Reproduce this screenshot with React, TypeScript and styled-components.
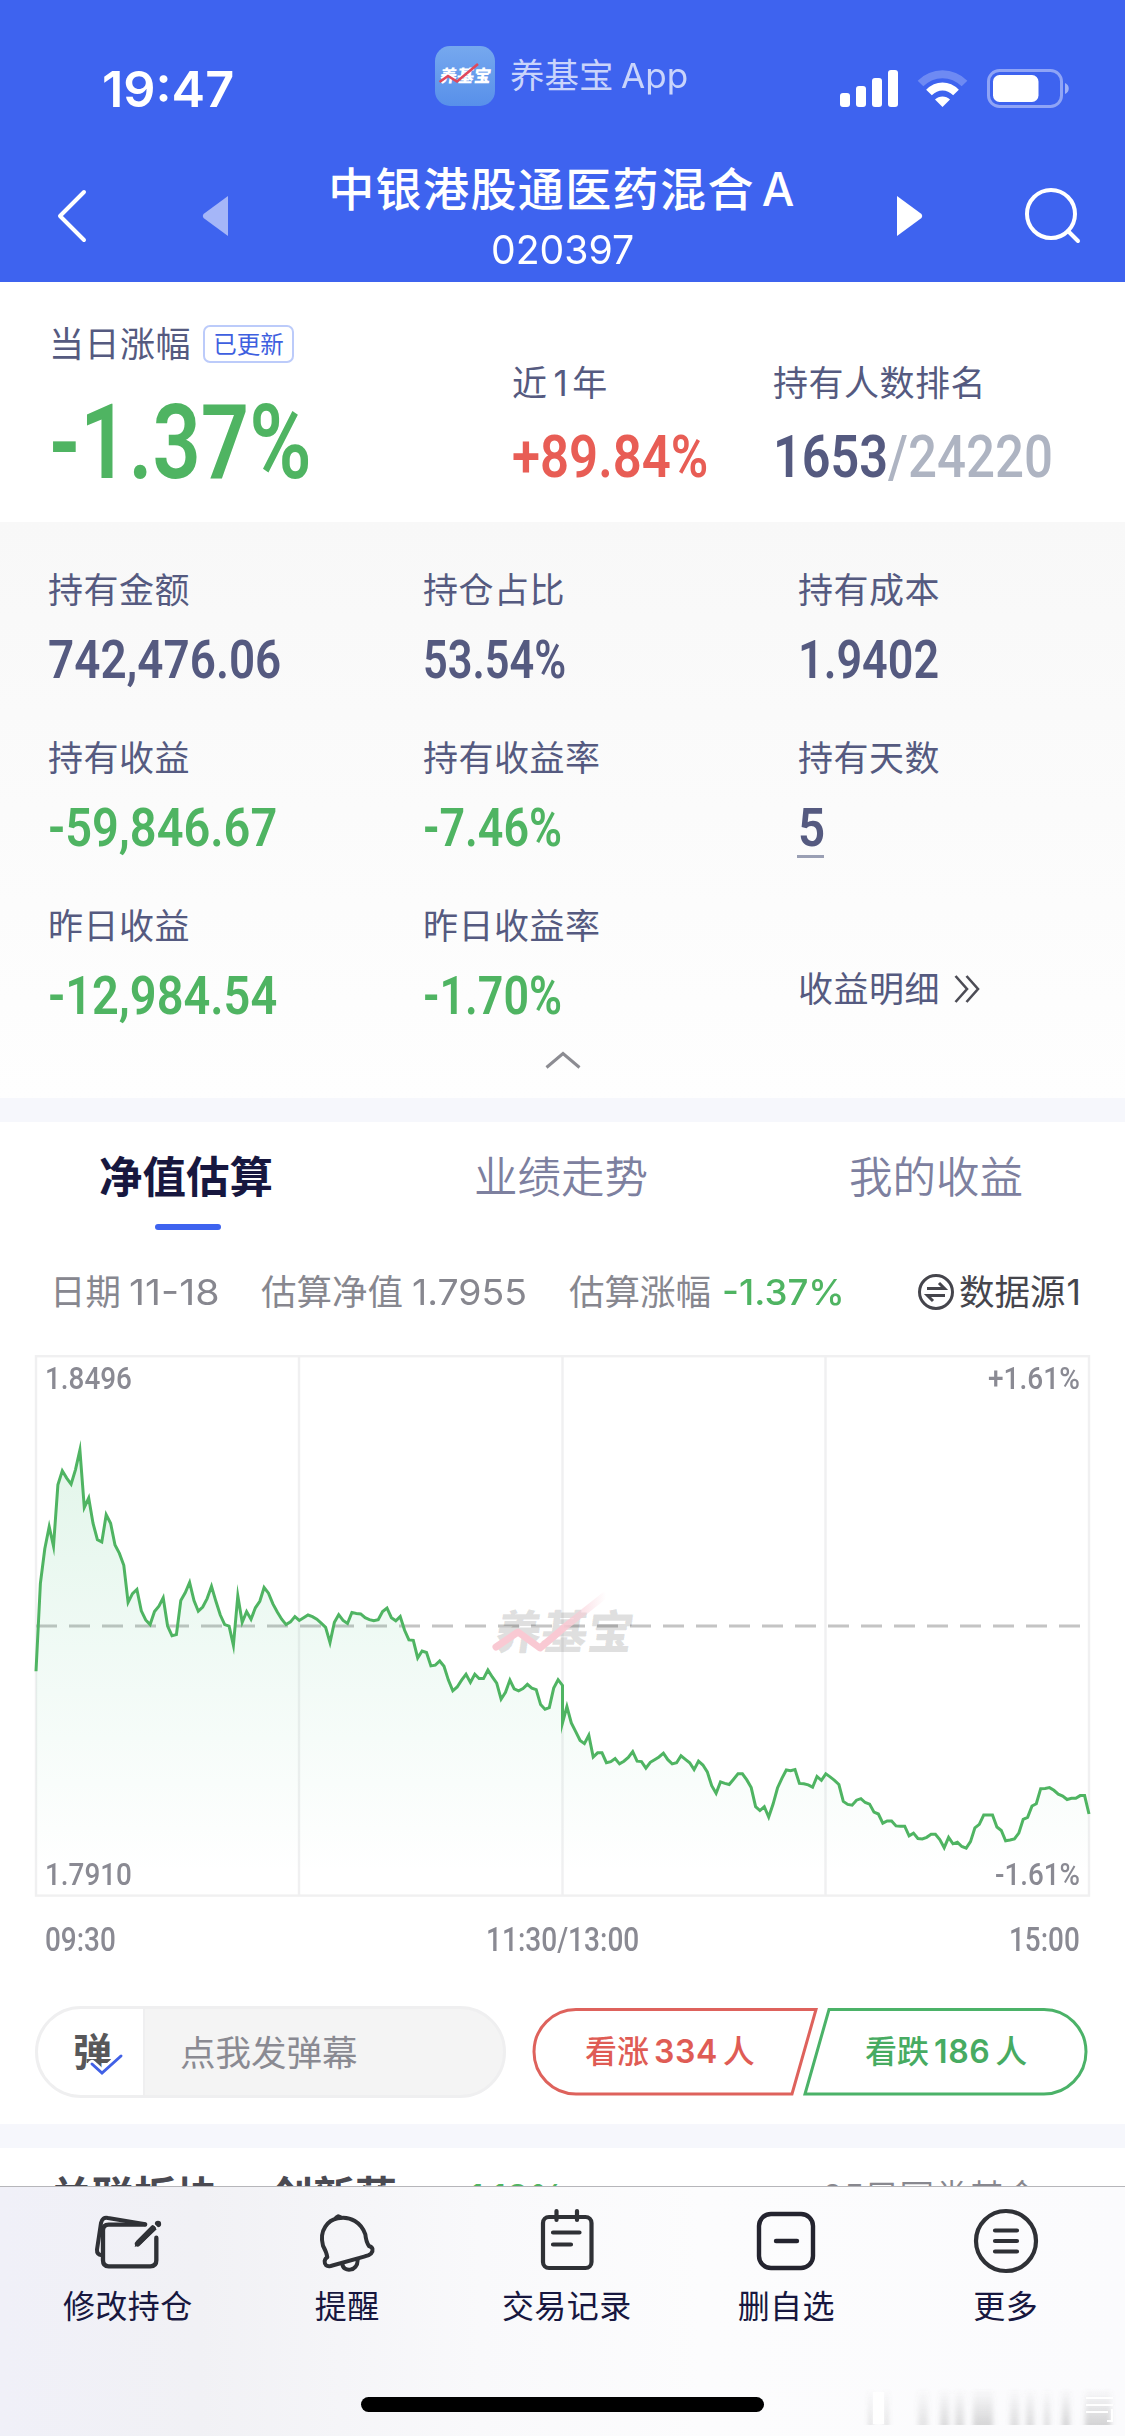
import React, { useLayoutEffect, useRef, useState } from "react";
import styled, { createGlobalStyle } from "styled-components";

const C = {
  blue: "#3e63ef",
  ink: "#555a80",
  green: "#4fb462",
  red: "#e85d55",
  gray: "#8a8a93",
  band: "#f6f7fc",
  navy: "#17173f",
  icon: "#2f3136",
};

const sans = `Inter, "Noto Sans CJK SC", sans-serif`;
const din = `Roboto, "Noto Sans CJK SC", sans-serif`;

const GlobalStyle = createGlobalStyle`
  * { box-sizing: border-box; }
  body { margin: 0; background: #fff; font-family: ${sans}; }
  svg { display: block; flex: none; }
`;

/* ---------- text squeezed to a fixed advance ---------- */

const FitBox = styled.span<{ $w: number; $size: number; $weight: number; $color: string; $din: boolean }>`
  display: block;
  flex: none;
  width: ${(p) => p.$w}px;
  font-family: ${(p) => (p.$din ? din : sans)};
  font-size: ${(p) => p.$size}px;
  font-weight: ${(p) => p.$weight};
  color: ${(p) => p.$color};
  white-space: nowrap;
`;
const FitInner = styled.span`
  display: inline-block;
  transform-origin: 0 50%;
`;

type FitProps = { w: number; size: number; weight?: number; color?: string; plain?: boolean; children: React.ReactNode };

function Fit({ w, size, weight = 600, color = C.ink, plain = false, children }: FitProps) {
  const ref = useRef<HTMLSpanElement>(null);
  const [k, setK] = useState(1);
  useLayoutEffect(() => {
    if (ref.current && ref.current.offsetWidth) setK(w / ref.current.offsetWidth);
  }, [w, size]);
  return (
    <FitBox $w={w} $size={size} $weight={weight} $color={color} $din={!plain}>
      <FitInner ref={ref} style={{ transform: `scaleX(${k})` }}>{children}</FitInner>
    </FitBox>
  );
}

/* ---------- page ---------- */

const Page = styled.div`
  width: 1125px;
  height: 2436px;
  overflow: hidden;
  display: flex;
  flex-direction: column;
  background: #fff;
`;

const Header = styled.header`
  height: 282px;
  flex: none;
  background: ${C.blue};
  color: #fff;
`;

const StatusBar = styled.div`
  height: 150px;
  display: flex;
  align-items: flex-start;
`;
const Clock = styled.div`
  width: 435px;
  padding: 64px 0 0 102px;
  line-height: 50px;
`;
const AppTag = styled.div`
  display: flex;
  align-items: center;
  width: 405px;
  padding-top: 45px;
  color: #c9d4fb;
  font-size: 34.5px;
  line-height: 62px;
`;
const AppIcon = styled.div`
  position: relative;
  width: 60px;
  height: 60px;
  margin-right: 15px;
  border-radius: 15px;
  background: linear-gradient(180deg, #76a8ee, #5890ea);
  display: flex;
  align-items: center;
  justify-content: center;
  svg { position: absolute; left: 0; top: 0; }
`;
const AppIconText = styled.span`
  font-size: 17px;
  font-weight: 900;
  color: #fff;
  transform: skewX(-8deg);
  line-height: 60px;
  white-space: nowrap;
`;
const AppName = styled.span`
  margin-right: 7px;
  white-space: nowrap;
`;
const Signals = styled.div`
  display: flex;
  padding-top: 69px;
`;

const NavRow = styled.div`
  height: 132px;
  display: flex;
  align-items: flex-start;
`;
const NavSide = styled.div<{ $w: number; $pad: number; $top: number }>`
  width: ${(p) => p.$w}px;
  padding: ${(p) => p.$top}px 0 0 ${(p) => p.$pad}px;
`;
const TitleBlock = styled.div`
  width: 600px;
  padding-top: 11px;
  display: flex;
  flex-direction: column;
  align-items: center;
  gap: 8px;
`;
const Title = styled.div`
  display: flex;
  gap: 7px;
  height: 56px;
  line-height: 57px;
  font-size: 46px;
  font-weight: 500;
  letter-spacing: 1.4px;
  white-space: nowrap;
`;
const Code = styled.div`
  height: 48px;
  line-height: 49px;
`;

/* ---------- summary ---------- */

const Summary = styled.section`
  height: 240px;
  flex: none;
  display: flex;
  padding-left: 50px;
`;
const SumCol = styled.div<{ $w: number; $top: number }>`
  width: ${(p) => p.$w}px;
  padding-top: ${(p) => p.$top}px;
`;
const Label = styled.div`
  display: flex;
  align-items: center;
  height: 40px;
  line-height: 41px;
  margin-left: -1px;
  font-size: 35px;
  letter-spacing: 0.5px;
  color: ${C.ink};
  white-space: nowrap;
`;
const YearDigit = styled.span`
  margin: 0 4px 0 6px;
`;
const Badge = styled.span`
  margin-left: 12px;
  width: 91px;
  height: 38px;
  line-height: 35px;
  border: 2px solid #bccbfa;
  border-radius: 7px;
  text-align: center;
  font-size: 23.5px;
  letter-spacing: 0;
  color: #3e5fe0;
`;
const Num = styled.div<{ $h: number; $mt: number }>`
  display: flex;
  height: ${(p) => p.$h}px;
  line-height: ${(p) => p.$h + 1}px;
  margin-top: ${(p) => p.$mt}px;
  margin-left: -1px;
`;

/* ---------- holdings ---------- */

const Holdings = styled.section`
  height: 576px;
  flex: none;
  padding-top: 48px;
  background: linear-gradient(180deg, #f8f8f8, #fefefe);
`;
const HoldGrid = styled.div`
  display: grid;
  grid-template-columns: 375px 375px 1fr;
  grid-auto-rows: 114px;
  row-gap: 54px;
  padding-left: 49px;
`;
const DayRule = styled.div`
  width: 27px;
  height: 3px;
  margin: 3px 0 0 -2px;
  background: #9a9fb4;
`;
const DetailLink = styled(Label)`
  margin-top: 63px;
  gap: 14px;
`;
const Collapse = styled.div`
  display: flex;
  justify-content: center;
  padding-top: 31px;
`;

const Band = styled.div<{ $h: number }>`
  height: ${(p) => p.$h}px;
  flex: none;
  background: ${C.band};
`;

/* ---------- tabs ---------- */

const Tabs = styled.nav`
  display: flex;
  height: 108px;
  flex: none;
`;
const Tab = styled.div<{ $on?: boolean }>`
  width: 375px;
  padding: 27px 3px 0 0;
  display: flex;
  flex-direction: column;
  align-items: center;
  font-size: 43.5px;
  line-height: 56px;
  font-weight: ${(p) => (p.$on ? 600 : 350)};
  color: ${(p) => (p.$on ? C.navy : "#7d809f")};
  &::after {
    content: "";
    width: 66px;
    height: 6px;
    margin: 19px 0 0 3px;
    border-radius: 3px;
    background: ${(p) => (p.$on ? C.blue : "transparent")};
  }
`;

const InfoRow = styled.div`
  display: flex;
  align-items: center;
  height: 125px;
  flex: none;
  padding-left: 50px;
  font-size: 35.5px;
  line-height: 50px;
  color: #87878f;
  white-space: nowrap;
`;
const InfoItem = styled.div<{ $w: number; $gap: number }>`
  display: flex;
  gap: ${(p) => p.$gap}px;
  width: ${(p) => p.$w}px;
`;
const Source = styled.div`
  display: flex;
  align-items: center;
  gap: 4px;
  color: #45454c;
`;
const SourceNo = styled.span`
  margin-left: 1px;
`;

/* ---------- chart ---------- */

const ChartBox = styled.section`
  position: relative;
  width: 1125px;
  height: 541px;
  flex: none;
`;
const Corner = styled.div<{ $right?: boolean; $bottom?: boolean }>`
  position: absolute;
  ${(p) => (p.$right ? "right: 45px;" : "left: 45px;")}
  ${(p) => (p.$bottom ? "bottom: 2px;" : "top: 3px;")}
  height: 40px;
  line-height: 40px;
`;
const Mark = styled.div`
  position: absolute;
  left: 496px;
  top: 248px;
  font-size: 46px;
  line-height: 58px;
  font-weight: 900;
  color: rgba(0, 0, 0, 0.12);
  transform: skewX(-8deg);
  white-space: nowrap;
`;
const MarkLine = styled.svg`
  position: absolute;
  left: 488px;
  top: 234px;
`;
const Times = styled.div`
  display: flex;
  justify-content: space-between;
  height: 109px;
  flex: none;
  padding: 24px 45px 0;
  line-height: 40px;
`;

/* ---------- actions ---------- */

const Actions = styled.section`
  height: 119px;
  flex: none;
  display: flex;
  align-items: flex-start;
  padding: 1px 0 0 35px;
`;
const Danmu = styled.div`
  width: 471px;
  height: 92px;
  margin-right: 26px;
  display: flex;
  border: 3px solid #efeff0;
  border-radius: 46px;
  background: #f4f4f4;
  overflow: hidden;
`;
const DanmuToggle = styled.div`
  position: relative;
  width: 107px;
  border-right: 2px solid #efeff0;
  background: #fff;
  padding-left: 35px;
  font-size: 39px;
  font-weight: 600;
  line-height: 86px;
  color: #58585a;
  svg { position: absolute; left: 50px; top: 41px; }
`;
const DanmuText = styled.div`
  padding-left: 35px;
  font-size: 35.5px;
  line-height: 89px;
  color: #8a8a92;
`;
const Vote = styled.div<{ $color: string; $shift: number; $ml: number }>`
  position: relative;
  width: 286px;
  height: 92px;
  margin-left: ${(p) => p.$ml}px;
  padding-left: ${(p) => p.$shift}px;
  display: flex;
  gap: 5px;
  color: ${(p) => p.$color};
  font-size: 32px;
  font-weight: 500;
  line-height: 92px;
  white-space: nowrap;
  svg { position: absolute; left: 0; top: -1px; }
`;
const Count = styled.span`
  letter-spacing: 0.6px;
  font-weight: 600;
`;

/* ---------- clipped section ---------- */

const Related = styled.section`
  height: 38px;
  flex: none;
  overflow: hidden;
  display: flex;
  padding: 28px 0 0 50px;
  font-size: 42px;
  font-weight: 600;
  line-height: 42px;
  color: #4a4a52;
  white-space: nowrap;
`;
const RelText = styled.div<{ $w: number }>`
  width: ${(p) => p.$w}px;
`;
const RelRate = styled.div`
  width: 370px;
  font-size: 36px;
  font-weight: 500;
  color: ${C.green};
`;
const RelMore = styled.div`
  font-size: 35px;
  font-weight: 350;
  color: #88888f;
`;

/* ---------- bottom bar ---------- */

const BottomBar = styled.footer`
  position: relative;
  height: 250px;
  flex: none;
  border-top: 1px solid #b6b6ba;
  background: linear-gradient(90deg, #f0f0f8 0, #f1f1f5 200px, #f9f9fb 480px, #fcfcfd 700px, #fbfbfd 100%);
`;
const BarItems = styled.div`
  display: flex;
  padding-left: 18px;
`;
const BarItem = styled.div`
  width: 219.5px;
  padding-top: 20px;
  display: flex;
  flex-direction: column;
  align-items: center;
  font-size: 32px;
  line-height: 40px;
  letter-spacing: 0.4px;
  color: ${C.navy};
  svg { margin-bottom: 12px; }
`;
const HomeIndicator = styled.div`
  width: 403px;
  height: 15px;
  margin: 70px auto 0;
  border-radius: 8px;
  background: #000;
`;
const Stamp = styled.svg`
  position: absolute;
  right: 0;
  bottom: 0;
`;

/* ---------- data: one level per trading minute, on the 1451..41 axis ---------- */

const MORNING = [
  865, 635, 545, 487, 538, 378, 341, 360, 376, 338, 287, 437, 412, 478, 521, 527, 456, 478, 535, 557, 588, 685, 662,
  651, 707, 731, 743, 709, 695, 673, 747, 772, 769, 680, 660, 633, 680, 708, 697, 675, 643, 682, 718, 743, 747, 797,
  668, 737, 709, 729, 699, 682, 646, 661, 689, 710, 729, 743, 736, 722, 732, 725, 718, 722, 729, 739, 750, 790, 737,
  717, 732, 740, 711, 714, 715, 725, 730, 733, 730, 709, 700, 725, 733, 722, 758, 783, 784, 830, 812, 816, 851, 849,
  838, 852, 888, 916, 906, 888, 873, 894, 873, 884, 884, 862, 880, 896, 938, 920, 888, 911, 916, 910, 899, 909, 913,
  952, 964, 960, 909, 887, 902,
];
const AFTERNOON = [
  1000, 957, 1000, 1023, 1046, 1054, 1032, 1089, 1078, 1078, 1104, 1101, 1093, 1107, 1100, 1090, 1075, 1100, 1101,
  1118, 1103, 1096, 1089, 1079, 1096, 1107, 1104, 1086, 1095, 1104, 1122, 1100, 1110, 1128, 1164, 1184, 1154, 1158,
  1161, 1147, 1133, 1133, 1149, 1169, 1219, 1229, 1219, 1246, 1212, 1170, 1145, 1123, 1125, 1122, 1158, 1159, 1162,
  1168, 1140, 1150, 1133, 1141, 1150, 1161, 1205, 1213, 1215, 1202, 1198, 1208, 1212, 1233, 1238, 1262, 1256, 1256,
  1269, 1270, 1270, 1295, 1288, 1302, 1303, 1299, 1291, 1291, 1305, 1326, 1299, 1316, 1312, 1323, 1327, 1310, 1274,
  1265, 1241, 1241, 1241, 1272, 1281, 1308, 1306, 1303, 1288, 1252, 1247, 1217, 1211, 1172, 1171, 1169, 1176, 1186,
  1191, 1200, 1197, 1197, 1190, 1190, 1238,
];
const STEP = 1053 / 240;
const toY = (v: number) => 1 + ((v - 41) / 1410) * 539.5;
const pts = [
  ...MORNING.map((v, i) => [36 + i * STEP, toY(v)]),
  ...AFTERNOON.map((v, i) => [36 + (120 + i) * STEP, toY(v)]),
];
const line = pts.map(([x, y], i) => `${i ? "L" : "M"}${x.toFixed(1)} ${y.toFixed(1)}`).join("");

function Chart() {
  return (
    <ChartBox>
      <svg width="1125" height="542" viewBox="0 0 1125 542">
        <defs>
          <linearGradient id="area" x1="0" y1="90" x2="0" y2="541" gradientUnits="userSpaceOnUse">
            <stop offset="0" stopColor="#3fbf6f" stopOpacity="0.15" />
            <stop offset="0.5" stopColor="#3fbf7f" stopOpacity="0.07" />
            <stop offset="0.95" stopColor="#3fbf7f" stopOpacity="0" />
          </linearGradient>
        </defs>
        <g fill="none" stroke="#f0f0f1" strokeWidth="2.4">
          <rect x="36" y="1.2" width="1053" height="539.4" />
          <path d="M299 1V540M562.5 1V540M825.5 1V540" />
        </g>
        <path d="M36 271H1081" stroke="#c4c4c4" strokeWidth="3" strokeDasharray="21 12" />
        <path d={`${line}V540H36Z`} fill="url(#area)" />
        <path d={line} fill="none" stroke={C.green} strokeWidth="3" strokeMiterlimit="8" />
      </svg>
      <Mark>养基宝</Mark>
      <MarkLine width="130" height="80" viewBox="488 1587 130 80">
        <defs>
          <linearGradient id="rise" x1="494" y1="0" x2="606" y2="0" gradientUnits="userSpaceOnUse">
            <stop offset="0.6" stopColor="#f9c9d3" />
            <stop offset="1" stopColor="#f9c9d3" stopOpacity="0" />
          </linearGradient>
        </defs>
        <path d="M496 1645L518 1630L540 1646L566 1624L604 1594" fill="none" stroke="url(#rise)" strokeWidth="7" strokeLinecap="round" strokeLinejoin="round" />
      </MarkLine>
      <Corner><Fit w={87} size={32} weight={500} color={C.gray}>1.8496</Fit></Corner>
      <Corner $right><Fit w={92} size={32} weight={500} color={C.gray}>+1.61%</Fit></Corner>
      <Corner $bottom><Fit w={87} size={32} weight={500} color={C.gray}>1.7910</Fit></Corner>
      <Corner $right $bottom><Fit w={85} size={32} weight={500} color={C.gray}>-1.61%</Fit></Corner>
    </ChartBox>
  );
}

/* ---------- icons ---------- */

const StatusIcons = () => (
  <svg width="230" height="40" viewBox="840 69 230 40">
    <g fill="#fff">
      <rect x="840" y="93" width="10" height="14" rx="3" />
      <rect x="856" y="86" width="10" height="21" rx="3" />
      <rect x="872" y="78" width="10" height="29" rx="3" />
      <rect x="888" y="70" width="10" height="37" rx="3" />
      <path d="M942.5 107L935 99.5C939 95.5 946 95.5 950 99.5Z" />
    </g>
    <path d="M920.5 83.5C933 71 952 71 964.5 83.5" fill="none" stroke="#fff" strokeOpacity="0.25" strokeWidth="8" />
    <path d="M929 92.5C937 84.5 948 84.5 956 92.5" fill="none" stroke="#fff" strokeWidth="8" />
    <rect x="988.5" y="70.5" width="73" height="36" rx="11" fill="none" stroke="#fff" strokeOpacity="0.42" strokeWidth="3" />
    <rect x="993" y="75" width="45.500" height="27" rx="6.500" fill="#fff" />
    <path d="M1065 83C1070 85 1070 92 1065 94Z" fill="#fff" fillOpacity="0.5" />
  </svg>
);
const Back = () => (
  <svg width="34" height="56" viewBox="0 0 34 56" fill="none" stroke="#fff" strokeWidth="4" strokeLinecap="round" strokeLinejoin="round">
    <path d="M29 4L5 28L29 52" />
  </svg>
);
const Prev = () => (
  <svg width="27" height="42" viewBox="0 0 27 42"><path d="M26 1V41L1.500 23Q0 21 1.500 19Z" fill="#a5b6f8" /></svg>
);
const Next = () => (
  <svg width="27" height="42" viewBox="0 0 27 42"><path d="M1 1V41L25.500 23Q27 21 25.500 19Z" fill="#fff" /></svg>
);
const Search = () => (
  <svg width="60" height="60" viewBox="0 0 60 60" fill="none" stroke="#fff" strokeWidth="4" strokeLinecap="round">
    <circle cx="27" cy="27" r="24" /><path d="M44 44L54 54" />
  </svg>
);
const Swap = () => (
  <svg width="38" height="38" viewBox="0 0 38 38" fill="none" stroke="#45454c" strokeWidth="3">
    <circle cx="19" cy="18" r="16.500" />
    <path d="M10 14.500H27.500L22 9M28 21.500H10.500L16 27" />
  </svg>
);
const EditIcon = () => (
  <svg width="68" height="68" viewBox="282 104 204 204" fill="none" stroke={C.icon} strokeWidth="13" strokeLinecap="round" strokeLinejoin="round">
    <path d="M434 157H326Q309 157 309 174V264Q309 282 326 282H451Q469 282 469 264V196" />
    <path d="M306 249Q290 247 291 232L303 152Q307 133 324 137L436 156" strokeWidth="12" />
    <path d="M404 224L409 206L457 158L470 171L423 215Z" fill={C.icon} stroke="none" />
    <path d="M413 214L459 168" strokeWidth="17" />
    <circle cx="474" cy="155" r="9.500" fill={C.icon} stroke="none" />
    <path d="M461 155L473 167" stroke="#f1f1f5" strokeWidth="4" />
  </svg>
);
const BellIcon = () => (
  <svg width="68" height="68" viewBox="944 104 204 204" fill="none" stroke={C.icon} strokeWidth="12" strokeLinejoin="round" strokeLinecap="round">
    <path d="M987 255Q985 240 974 220C961 172 991 143 1018 138C1057 130 1089 151 1101 186Q1103 208 1112 221Q1130 227 1118 244Q1112 250 1100 252L997 281Q978 284 979 266Q981 257 987 255Z" />
    <path d="M1013 136L1020 132L1027 135" />
    <path d="M1032 275C1034 300 1078 299 1078 263" />
  </svg>
);
const RecordIcon = () => (
  <svg width="68" height="68" viewBox="533 2207 68 68" fill="none" stroke={C.icon} strokeWidth="4.200" strokeLinecap="round">
    <rect x="543" y="2217" width="48.500" height="51" rx="6" />
    <path d="M556.500 2211V2220M577 2211V2220M553 2232.500H579.500M553 2244.500H571" />
  </svg>
);
const RemoveIcon = () => (
  <svg width="68" height="68" viewBox="752 2207 68 68" fill="none" stroke="#24242f" strokeWidth="4.400" strokeLinecap="round">
    <rect x="759" y="2214" width="54" height="54" rx="12" /><path d="M776 2241H797" />
  </svg>
);
const MoreIcon = () => (
  <svg width="68" height="68" viewBox="971 2207 68 68" fill="none" stroke={C.icon} strokeWidth="4.200" strokeLinecap="round">
    <circle cx="1005" cy="2241" r="30" /><path d="M994 2230.500H1016M994 2241H1016M994 2251.500H1016" />
  </svg>
);

const BAR = [
  { label: "修改持仓", Icon: EditIcon },
  { label: "提醒", Icon: BellIcon },
  { label: "交易记录", Icon: RecordIcon },
  { label: "删自选", Icon: RemoveIcon },
  { label: "更多", Icon: MoreIcon },
];

const HOLD = [
  { label: "持有金额", value: "742,476.06", w: 233 },
  { label: "持仓占比", value: "53.54%", w: 143 },
  { label: "持有成本", value: "1.9402", w: 141 },
  { label: "持有收益", value: "-59,846.67", w: 229, color: C.green },
  { label: "持有收益率", value: "-7.46%", w: 139, color: C.green },
  { label: "持有天数", value: "5", w: 27, rule: true },
  { label: "昨日收益", value: "-12,984.54", w: 229, color: C.green },
  { label: "昨日收益率", value: "-1.70%", w: 139, color: C.green },
];

/* soft stripes fading upward in the corner: x, width, opacity */
const STRIPES = [
  [869, 3, 0.3], [885, 3, 0.3], [918, 10, 0.18], [940, 9, 0.24], [955, 9, 0.24], [973, 20, 0.28],
  [1010, 9, 0.22], [1026, 8, 0.24], [1044, 6, 0.22], [1062, 8, 0.28], [1085, 26, 0.3],
];

export default function App() {
  return (
    <Page>
      <GlobalStyle />
      <Header>
        <StatusBar>
          <Clock><Fit plain w={132} size={50} weight={600} color="#fff">19:47</Fit></Clock>
          <AppTag>
            <AppIcon>
              <AppIconText>养基宝</AppIconText>
              <svg width="60" height="60" viewBox="0 0 60 60" fill="none" stroke="#e0485c" strokeWidth="2.6">
                <path d="M4.500 36L13 30L22 35.500L43 18" />
              </svg>
            </AppIcon>
            <AppName>养基宝</AppName>
            <Fit plain w={67} size={34} weight={400} color="#c9d4fb">App</Fit>
          </AppTag>
          <Signals><StatusIcons /></Signals>
        </StatusBar>
        <NavRow>
          <NavSide $w={200} $pad={55} $top={38}><Back /></NavSide>
          <NavSide $w={62} $pad={2} $top={45}><Prev /></NavSide>
          <TitleBlock>
            <Title><span>中银港股通医药混合</span><span>A</span></Title>
            <Code><Fit plain w={143} size={40} weight={400} color="#fff">020397</Fit></Code>
          </TitleBlock>
          <NavSide $w={161} $pad={34} $top={45}><Next /></NavSide>
          <NavSide $w={100} $pad={1} $top={37}><Search /></NavSide>
        </NavRow>
      </Header>

      <Summary>
        <SumCol $w={463} $top={42}>
          <Label>当日涨幅<Badge>已更新</Badge></Label>
          <Num $h={80} $mt={38}><Fit w={263} size={103} color={C.green}>-1.37%</Fit></Num>
        </SumCol>
        <SumCol $w={261} $top={81}>
          <Label>近<YearDigit>1</YearDigit>年</Label>
          <Num $h={60} $mt={23}><Fit w={196} size={60} color={C.red}>+89.84%</Fit></Num>
        </SumCol>
        <SumCol $w={340} $top={81}>
          <Label>持有人数排名</Label>
          <Num $h={60} $mt={23}>
            <Fit w={115} size={60}>1653</Fit>
            <Fit w={165} size={60} weight={500} color="#aeb4c2">/24220</Fit>
          </Num>
        </SumCol>
      </Summary>

      <Holdings>
        <HoldGrid>
          {HOLD.map((h) => (
            <div key={h.label}>
              <Label>{h.label}</Label>
              <Num $h={50} $mt={24}><Fit w={h.w} size={54.5} color={h.color}>{h.value}</Fit></Num>
              {h.rule && <DayRule />}
            </div>
          ))}
          <DetailLink>
            收益明细
            <svg width="26" height="28" viewBox="0 0 26 28" fill="none" stroke="#4c4c55" strokeWidth="2.600">
              <path d="M1.500 1L13 14L1.500 27M12.500 1L24 14L12.500 27" />
            </svg>
          </DetailLink>
        </HoldGrid>
        <Collapse>
          <svg width="36" height="18" viewBox="0 0 36 18" fill="none" stroke="#8c8c92" strokeWidth="3">
            <path d="M1.500 16.500L18 2.500L34.500 16.500" />
          </svg>
        </Collapse>
      </Holdings>

      <Band $h={24} />

      <Tabs>
        <Tab $on>净值估算</Tab>
        <Tab>业绩走势</Tab>
        <Tab>我的收益</Tab>
      </Tabs>

      <InfoRow>
        <InfoItem $w={211} $gap={8}>日期<Fit plain w={91} size={35.5} weight={400} color="#87878f">11-18</Fit></InfoItem>
        <InfoItem $w={308} $gap={9}>估算净值<Fit plain w={115} size={35.5} weight={400} color="#87878f">1.7955</Fit></InfoItem>
        <InfoItem $w={348} $gap={11}>估算涨幅<Fit plain w={123} size={35.5} weight={500} color={C.green}>-1.37%</Fit></InfoItem>
        <Source><Swap /><span>数据源<SourceNo>1</SourceNo></span></Source>
      </InfoRow>

      <Chart />

      <Times>
        <Fit w={71} size={33} weight={500} color={C.gray}>09:30</Fit>
        <Fit w={153} size={33} weight={500} color={C.gray}>11:30/13:00</Fit>
        <Fit w={71} size={33} weight={500} color={C.gray}>15:00</Fit>
      </Times>

      <Actions>
        <Danmu>
          <DanmuToggle>
            弹
            <svg width="36" height="28" viewBox="0 0 36 28" fill="none" strokeLinecap="round">
              <path d="M4 14L14 23L33 6" stroke="#fff" strokeWidth="8" />
              <path d="M4 14L14 23L33 6" stroke="#4161e6" strokeWidth="3" />
            </svg>
          </DanmuToggle>
          <DanmuText>点我发弹幕</DanmuText>
        </Danmu>
        <Vote $color="#df5c55" $shift={53} $ml={0}>
          <svg width="286" height="92" viewBox="0 0 286 92" fill="none" stroke="#de625c" strokeWidth="3">
            <path d="M44 4.500H284L260 89H44A42 42.250 0 0 1 44 4.500Z" />
          </svg>
          看涨<Count>334</Count>人
        </Vote>
        <Vote $color="#47ab62" $shift={63} $ml={-16}>
          <svg width="286" height="92" viewBox="0 0 286 92" fill="none" stroke="#4bb268" strokeWidth="3">
            <path d="M27 4.500H242A42 42.250 0 0 1 242 89H3Z" />
          </svg>
          看跌<Count>186</Count>人
        </Vote>
      </Actions>

      <Band $h={24} />

      <Related>
        <RelText $w={221}>关联板块</RelText>
        <RelText $w={181}>创新药</RelText>
        <RelRate>-1.18%</RelRate>
        <RelMore>25只同类基金 ›</RelMore>
      </Related>

      <BottomBar>
        <BarItems>
          {BAR.map(({ label, Icon }) => (
            <BarItem key={label}>
              <Icon />
              {label}
            </BarItem>
          ))}
        </BarItems>
        <HomeIndicator />
        <Stamp width="265" height="60" viewBox="860 2376 265 60">
          <defs>
            <linearGradient id="fade" x1="0" y1="0" x2="0" y2="1">
              <stop offset="0" stopColor="#777" stopOpacity="0" />
              <stop offset="1" stopColor="#777" />
            </linearGradient>
            <filter id="soft" x="-5%" y="-5%" width="110%" height="110%"><feGaussianBlur stdDeviation="2.6 0.3" /></filter>
          </defs>
          <g filter="url(#soft)">
            {STRIPES.map(([x, w, o]) => (
              <rect key={x} x={x} y="2388" width={w} height="37" fill="url(#fade)" opacity={o} />
            ))}
          </g>
          <rect x="873" y="2392" width="11" height="32" fill="#fff" />
          <path d="M1086 2398H1113M1086 2405H1113M1086 2412H1108M1112 2409V2421H1107" stroke="#fff" strokeWidth="2" fill="none" />
        </Stamp>
      </BottomBar>
    </Page>
  );
}
